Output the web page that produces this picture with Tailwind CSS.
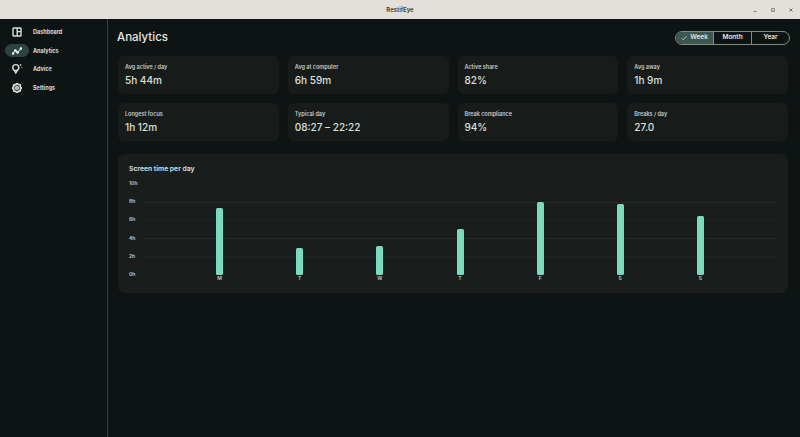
<!DOCTYPE html>
<html lang="en">
<head>
    <meta charset="UTF-8">
    <meta name="viewport" content="width=device-width, initial-scale=1.0">
    <title>RestifEye - Analytics</title>
    <script src="https://cdn.jsdelivr.net/npm/@tailwindcss/browser@4"></script>
</head>
<body class="bg-[#0e1413] h-[437px] w-[800px] overflow-hidden flex flex-col font-['Inter',sans-serif]">
    <!-- title bar -->
    <header class="h-[19px] bg-[#e3dfdb] flex items-center relative shrink-0">
        <div class="w-full text-center text-[6px] font-semibold text-[#3a3a3a]">RestifEye</div>
        <div class="absolute right-[6px] top-0 h-[19px] flex items-center gap-[12px] text-[#666]">
            <svg class="w-[6px] h-[6px]" viewBox="0 0 6 6"><path d="M1.5 4.5h3" stroke="currentColor" stroke-width=".8"/></svg>
            <svg class="w-[6px] h-[6px]" viewBox="0 0 6 6"><rect x="1.7" y="1.7" width="2.6" height="2.6" fill="none" stroke="currentColor" stroke-width=".8"/></svg>
            <svg class="w-[6px] h-[6px]" viewBox="0 0 6 6"><path d="M1.5 1.5l3 3M4.5 1.5l-3 3" stroke="currentColor" stroke-width=".9"/></svg>
        </div>
    </header>

    <div class="flex flex-1 min-h-0">
        <!-- sidebar -->
        <nav class="w-[108px] shrink-0 border-r border-[#3a403e] pt-[4px] pl-[5px] flex flex-col text-[5.5px] font-bold text-[#d9dedb]">
            <a class="h-[18.5px] flex items-center">
                <span class="w-[24px] flex justify-center">
                    <svg class="w-[10px] h-[10px]" viewBox="0 0 10 10" fill="none" stroke="#d9dedb" stroke-width="1.4"><rect x="1" y="1" width="8" height="8" rx="0.6"/><path d="M5.2 1v8M5.2 4.6H9"/></svg>
                </span>
                <span class="ml-[4px]">Dashboard</span>
            </a>
            <a class="h-[18.5px] flex items-center">
                <span class="w-[24px] h-[13px] rounded-full bg-[#2c4440] flex justify-center items-center">
                    <svg class="w-[10px] h-[8px]" viewBox="0 0 10 8" fill="none" stroke="#e4eeea" stroke-width="1.1"><path d="M1 6.5l2.4-3 2.2 2L9 1.5"/><circle cx="1" cy="6.5" r=".8" fill="#e4eeea"/><circle cx="3.4" cy="3.5" r=".8" fill="#e4eeea"/><circle cx="5.6" cy="5.5" r=".8" fill="#e4eeea"/><circle cx="9" cy="1.5" r=".8" fill="#e4eeea"/></svg>
                </span>
                <span class="ml-[4px]">Analytics</span>
            </a>
            <a class="h-[18.5px] flex items-center">
                <span class="w-[24px] flex justify-center">
                    <svg class="w-[12px] h-[12px]" viewBox="0 0 12 12" fill="none" stroke="#d9dedb" stroke-width="1.4"><circle cx="4.8" cy="4.6" r="3"/><path d="M3.2 7.4L4.8 10l1.6-2.6"/><path d="M9.6 1.2v1.6M8.8 2h1.6" stroke-width=".8"/><path d="M10.4 4.6h.9" stroke-width=".8"/></svg>
                </span>
                <span class="ml-[4px]">Advice</span>
            </a>
            <a class="h-[18.5px] flex items-center">
                <span class="w-[24px] flex justify-center">
                    <svg class="w-[10px] h-[10px]" viewBox="0 0 24 24" fill="none" stroke="#d9dedb" stroke-width="3.6"><circle cx="12" cy="12" r="3.2"/><path d="M19.4 15a1.65 1.65 0 0 0 .33 1.82l.06.06a2 2 0 1 1-2.83 2.83l-.06-.06a1.65 1.65 0 0 0-2.82 1.17V21a2 2 0 1 1-4 0v-.09a1.65 1.65 0 0 0-2.82-1.17l-.06.06a2 2 0 1 1-2.83-2.83l.06-.06A1.65 1.65 0 0 0 3.26 14H3a2 2 0 1 1 0-4h.09a1.65 1.65 0 0 0 1.17-2.82l-.06-.06a2 2 0 1 1 2.83-2.83l.06.06A1.65 1.65 0 0 0 10 3.09V3a2 2 0 1 1 4 0v.09a1.65 1.65 0 0 0 2.82 1.17l.06-.06a2 2 0 1 1 2.83 2.83l-.06.06A1.65 1.65 0 0 0 20.91 10H21a2 2 0 1 1 0 4h-.09a1.65 1.65 0 0 0-1.51 1z"/></svg>
                </span>
                <span class="ml-[4px]">Settings</span>
            </a>
        </nav>

        <!-- main -->
        <main class="flex-1 min-w-0 pl-[10px] pr-[12px]">
            <div class="h-[37px] flex items-center justify-between">
                <h1 class="text-[11.5px] font-medium text-[#e4e8e6] ml-[-1px] mt-px">Analytics</h1>
                <div class="flex h-[14px] mr-[-2px] rounded-full border border-[#7d8a86] text-[6.5px] font-semibold text-[#e4e8e6] overflow-hidden">
                    <div class="w-[38px] bg-[#3c5650] flex items-center justify-center gap-[3px] border-r border-[#7d8a86]">
                        <svg class="w-[6px] h-[6px]" viewBox="0 0 6 6" fill="none" stroke="#e4e8e6" stroke-width=".7"><path d="M.6 3.2l1.6 1.6L5.4 1.2"/></svg>
                        Week
                    </div>
                    <div class="w-[38px] flex items-center justify-center border-r border-[#7d8a86]">Month</div>
                    <div class="w-[37px] flex items-center justify-center">Year</div>
                </div>
            </div>

            <!-- stats -->
            <section class="grid grid-cols-4 gap-x-[9px] gap-y-[9px]">
                <div class="h-[38px] rounded-[6px] bg-[#171c1b] pl-[7px] pt-[7px]"><p class="text-[5.5px] leading-[8px] font-semibold text-[#c5cac8]">Avg active / day</p><p class="text-[10px] leading-[14px] mt-[2px] font-medium text-[#dcE0de]">5h 44m</p></div>
                <div class="h-[38px] rounded-[6px] bg-[#171c1b] pl-[7px] pt-[7px]"><p class="text-[5.5px] leading-[8px] font-semibold text-[#c5cac8]">Avg at computer</p><p class="text-[10px] leading-[14px] mt-[2px] font-medium text-[#dcE0de]">6h 59m</p></div>
                <div class="h-[38px] rounded-[6px] bg-[#171c1b] pl-[7px] pt-[7px]"><p class="text-[5.5px] leading-[8px] font-semibold text-[#c5cac8]">Active share</p><p class="text-[10px] leading-[14px] mt-[2px] font-medium text-[#dcE0de]">82%</p></div>
                <div class="h-[38px] rounded-[6px] bg-[#171c1b] pl-[7px] pt-[7px]"><p class="text-[5.5px] leading-[8px] font-semibold text-[#c5cac8]">Avg away</p><p class="text-[10px] leading-[14px] mt-[2px] font-medium text-[#dcE0de]">1h 9m</p></div>
                <div class="h-[38px] rounded-[6px] bg-[#171c1b] pl-[7px] pt-[7px]"><p class="text-[5.5px] leading-[8px] font-semibold text-[#c5cac8]">Longest focus</p><p class="text-[10px] leading-[14px] mt-[2px] font-medium text-[#dcE0de]">1h 12m</p></div>
                <div class="h-[38px] rounded-[6px] bg-[#171c1b] pl-[7px] pt-[7px]"><p class="text-[5.5px] leading-[8px] font-semibold text-[#c5cac8]">Typical day</p><p class="text-[10px] leading-[14px] mt-[2px] font-medium text-[#dcE0de]">08:27 – 22:22</p></div>
                <div class="h-[38px] rounded-[6px] bg-[#171c1b] pl-[7px] pt-[7px]"><p class="text-[5.5px] leading-[8px] font-semibold text-[#c5cac8]">Break compliance</p><p class="text-[10px] leading-[14px] mt-[2px] font-medium text-[#dcE0de]">94%</p></div>
                <div class="h-[38px] rounded-[6px] bg-[#171c1b] pl-[7px] pt-[7px]"><p class="text-[5.5px] leading-[8px] font-semibold text-[#c5cac8]">Breaks / day</p><p class="text-[10px] leading-[14px] mt-[2px] font-medium text-[#dcE0de]">27.0</p></div>
            </section>

            <!-- chart -->
            <section class="mt-[13px] h-[139px] rounded-[7px] bg-[#191e1d] pl-[11px] pr-[11px] pt-[9px]">
                <h2 class="text-[6.8px] leading-[11px] font-semibold text-[#dfe3e1]">Screen time per day</h2>
                <div class="mt-[7px] flex">
                    <div class="w-[14px] mt-[-7px] flex flex-col text-[5px] leading-[18.2px] font-semibold text-[#c5cac8] shrink-0">
                        <span>10h</span><span>8h</span><span>6h</span><span>4h</span><span>2h</span><span>0h</span>
                    </div>
                    <div class="flex-1 relative h-[100px]">
                        <!-- grid lines -->
                        <div class="absolute inset-x-0 top-[21px] bottom-[6px] flex flex-col justify-between">
                            <div class="h-px bg-[#232928]"></div>
                            <div class="h-px bg-[#1e2322]"></div>
                            <div class="h-px bg-[#232928]"></div>
                            <div class="h-px bg-[#1e2322]"></div>
                            <div class="h-px bg-[#191e1d]"></div>
                        </div>
                        <!-- bars -->
                        <div class="relative h-full flex justify-evenly">
                            <div class="w-[7px] h-full flex flex-col justify-end items-center"><div class="w-[7px] h-[67px] rounded-[1.5px] bg-[#7bd9bd]"></div><span class="text-[5px] leading-[5px] h-[5px] mt-px font-semibold text-[#c5cac8]">M</span></div>
                            <div class="w-[7px] h-full flex flex-col justify-end items-center"><div class="w-[7px] h-[27px] rounded-[1.5px] bg-[#7bd9bd]"></div><span class="text-[5px] leading-[5px] h-[5px] mt-px font-semibold text-[#c5cac8]">T</span></div>
                            <div class="w-[7px] h-full flex flex-col justify-end items-center"><div class="w-[7px] h-[29px] rounded-[1.5px] bg-[#7bd9bd]"></div><span class="text-[5px] leading-[5px] h-[5px] mt-px font-semibold text-[#c5cac8]">W</span></div>
                            <div class="w-[7px] h-full flex flex-col justify-end items-center"><div class="w-[7px] h-[46px] rounded-[1.5px] bg-[#7bd9bd]"></div><span class="text-[5px] leading-[5px] h-[5px] mt-px font-semibold text-[#c5cac8]">T</span></div>
                            <div class="w-[7px] h-full flex flex-col justify-end items-center"><div class="w-[7px] h-[73px] rounded-[1.5px] bg-[#7bd9bd]"></div><span class="text-[5px] leading-[5px] h-[5px] mt-px font-semibold text-[#c5cac8]">F</span></div>
                            <div class="w-[7px] h-full flex flex-col justify-end items-center"><div class="w-[7px] h-[71px] rounded-[1.5px] bg-[#7bd9bd]"></div><span class="text-[5px] leading-[5px] h-[5px] mt-px font-semibold text-[#c5cac8]">S</span></div>
                            <div class="w-[7px] h-full flex flex-col justify-end items-center"><div class="w-[7px] h-[59px] rounded-[1.5px] bg-[#7bd9bd]"></div><span class="text-[5px] leading-[5px] h-[5px] mt-px font-semibold text-[#c5cac8]">S</span></div>
                        </div>
                    </div>
                </div>
            </section>
        </main>
    </div>
</body>
</html>
